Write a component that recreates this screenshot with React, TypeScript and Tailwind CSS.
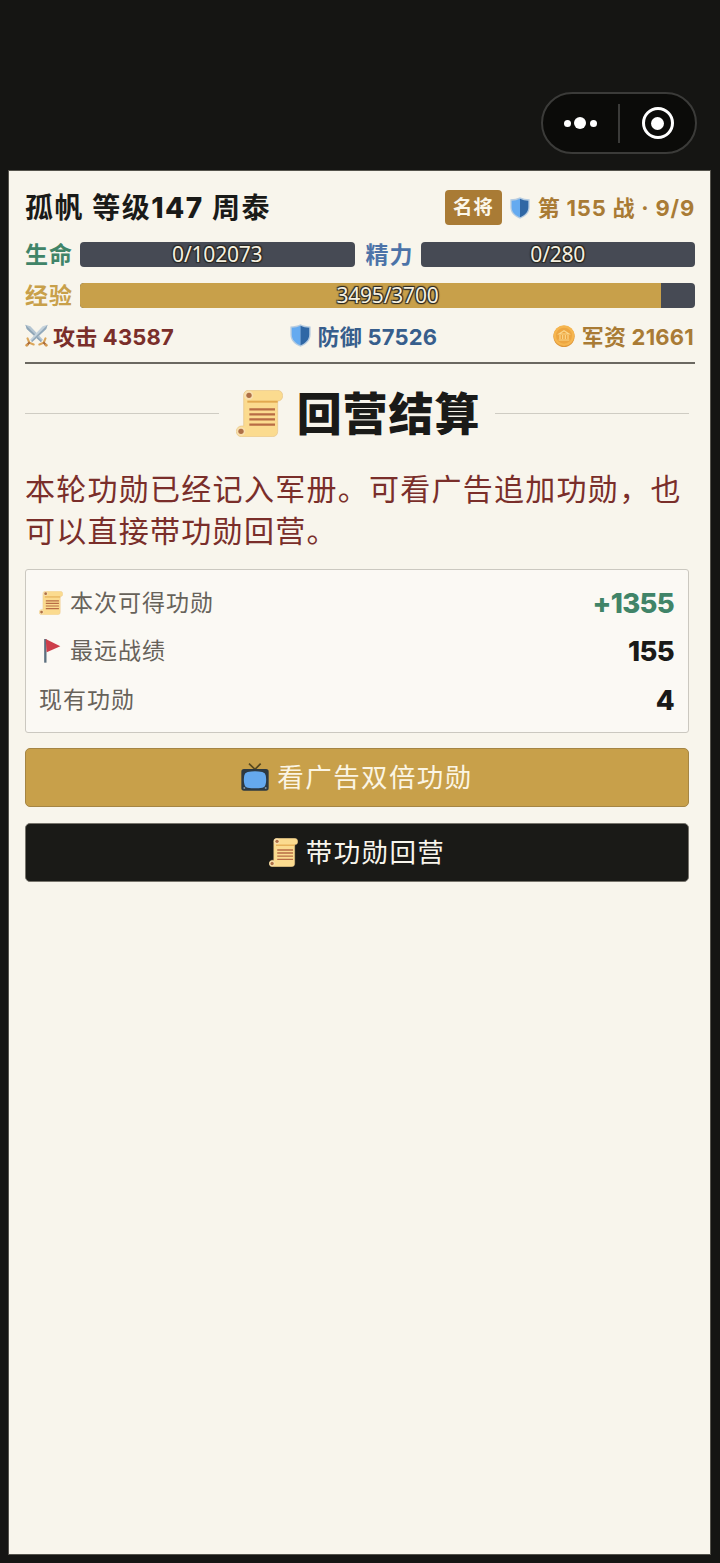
import type { ReactNode } from "react";
import clsx from "clsx";

type IconProps = { className?: string };

function ScrollIcon({ className }: IconProps) {
  return (
    <svg viewBox="0 0 141 141" className={clsx("shrink-0", className)}>
      <path
        d="M38 1H124C134 1 140 8 140 17C140 27 134 33 125 33V124C125 134 119 140 109 140H16C7 140 1 133 1 124C1 115 8 108 16 108H23V16C23 7 29 1 38 1Z"
        fill="#fbdb8f"
        stroke="#e6c48c"
        strokeWidth="2"
      />
      <circle cx="38" cy="16" r="14" fill="#f8dfae" />
      <circle cx="15" cy="124" r="13" fill="#f8dfae" />
      <path d="M34 35H125" stroke="#e2a94f" strokeWidth="6" />
      <circle cx="39" cy="16" r="8" fill="#ae6f47" />
      <circle cx="15" cy="124" r="8" fill="#ae6f47" />
      <path
        d="M40 58H117M40 73H117M40 88H117M40 104H117"
        stroke="#b86c45"
        strokeWidth="7"
      />
    </svg>
  );
}

function ShieldIcon({ className }: IconProps) {
  return (
    <svg viewBox="0 0 60 66" className={clsx("shrink-0", className)}>
      <path
        d="M30 1C22 5 12 7 1 7V30C1 47 13 59 30 65C47 59 59 47 59 30V7C48 7 38 5 30 1Z"
        fill="#b5cbe0"
      />
      <path d="M30 5C23 9 14 10 5 11V30C5 45 15 55 30 61Z" fill="#64aaf0" />
      <path d="M30 5C37 9 46 10 55 11V30C55 45 45 55 30 61Z" fill="#2f67a5" />
    </svg>
  );
}

function SwordsIcon({ className }: IconProps) {
  return (
    <svg viewBox="0 0 64 64" className={clsx("shrink-0", className)}>
      <path d="M1 2L15 6L50 44L44 50L5 14Z" fill="#b4c5d2" />
      <path d="M1 2L47 47L44 50L5 14Z" fill="#8fa5b6" />
      <path d="M63 2L49 6L14 44L20 50L59 14Z" fill="#c4d2dc" />
      <path d="M63 2L17 47L20 50L59 14Z" fill="#93a9ba" />
      <path
        d="M7 40L12 52L24 57M57 40L52 52L40 57"
        fill="none"
        stroke="#dba65a"
        strokeWidth="6"
        strokeLinecap="round"
      />
      <path d="M13 51L5 59M51 51L59 59" stroke="#a86b3b" strokeWidth="6" />
      <circle cx="5" cy="59" r="4" fill="#d59a50" />
      <circle cx="59" cy="59" r="4" fill="#d59a50" />
    </svg>
  );
}

function CoinIcon({ className }: IconProps) {
  return (
    <svg viewBox="0 0 66 66" className={clsx("shrink-0", className)}>
      <circle cx="33" cy="34" r="32" fill="#dd963a" />
      <circle cx="33" cy="32" r="31" fill="#f6b64f" />
      <circle cx="33" cy="32" r="24" fill="#eda641" />
      <path
        d="M18 27L33 17L48 27ZM21 30V42M29 30V42M37 30V42M45 30V42M17 45H49"
        fill="none"
        stroke="#fbd78c"
        strokeWidth="3.5"
      />
    </svg>
  );
}

function FlagIcon({ className }: IconProps) {
  return (
    <svg viewBox="0 0 72 72" className={clsx("shrink-0", className)}>
      <path d="M19 0V71" stroke="#5c7080" strokeWidth="7" />
      <path d="M20 0L64 22L23 40Z" fill="#cd3f4b" />
    </svg>
  );
}

function TvIcon({ className }: IconProps) {
  return (
    <svg viewBox="0 0 84 84" className={clsx("shrink-0", className)}>
      <path
        d="M24 2L42 19L59 2"
        fill="none"
        stroke="#57481f"
        strokeWidth="5"
      />
      <rect x="1" y="18" width="82" height="65" rx="8" fill="#2d3942" />
      <path
        d="M20 27Q42 22 64 27Q73 29 74 37Q77 50 74 63Q73 72 64 74Q42 78 20 74Q11 72 10 63Q7 50 10 37Q11 29 20 27Z"
        fill="#65a9ee"
      />
      <circle cx="10" cy="75" r="3" fill="#8294a0" />
      <circle cx="74" cy="75" r="3" fill="#8294a0" />
    </svg>
  );
}

function Capsule() {
  return (
    <div className="flex h-[62px] w-[156px] items-center rounded-full border-2 border-[#3b3b39] bg-[#0b0b09]">
      <div className="flex w-[75px] items-center justify-center gap-[3.5px] pr-px">
        <span className="size-[7px] rounded-full bg-white" />
        <span className="size-[12px] rounded-full bg-white" />
        <span className="size-[7px] rounded-full bg-white" />
      </div>
      <div className="h-[39px] w-[2px] bg-[#3b3b39]" />
      <div className="flex flex-1 items-center justify-center">
        <div className="flex size-[32px] items-center justify-center rounded-full border-[3.5px] border-white">
          <span className="size-[13px] rounded-full bg-white" />
        </div>
      </div>
    </div>
  );
}

type BarProps = {
  label: string;
  labelClass: string;
  value: number;
  max: number;
};

function StatBar({ label, labelClass, value, max }: BarProps) {
  return (
    <div className="flex h-[25px] flex-1 items-center gap-2">
      <span
        className={clsx(
          "w-[47px] pt-px text-[23px] leading-none font-bold tracking-[0.9px] whitespace-nowrap",
          labelClass
        )}
      >
        {label}
      </span>
      <div className="relative h-full flex-1 rounded-[4px] bg-[#464a54]">
        <div
          className="h-full rounded-l-[4px] bg-[#c8a04a]"
          style={{ width: `${(value / max) * 100}%` }}
        />
        <span className="absolute inset-0 text-center font-['Noto_Sans',sans-serif] text-[21px] leading-[24px] tracking-[-0.2px] text-[#f5f0e0] [text-shadow:1px_1px_1px_#2a2822,-1px_-1px_1px_#2a2822,1px_-1px_1px_#2a2822,-1px_1px_1px_#2a2822]">
          {value}/{max}
        </span>
      </div>
    </div>
  );
}

type StatProps = { icon: ReactNode; className: string; children: ReactNode };

function Stat({ icon, className, children }: StatProps) {
  return (
    <div
      className={clsx(
        "flex items-center gap-[5px] text-[22px] leading-none font-bold tracking-[0.2px] whitespace-nowrap",
        className
      )}
    >
      {icon}
      <span className="pt-0.5">{children}</span>
    </div>
  );
}

type RowProps = {
  icon?: ReactNode;
  label: string;
  value: string;
  valueClass?: string;
};

function ResultRow({ icon, label, value, valueClass }: RowProps) {
  return (
    <div className="flex h-[48.6px] items-center justify-between">
      <div className="flex items-center gap-[7px] text-[23px] leading-none tracking-[1px] text-[#67625a]">
        {icon}
        <span className="pt-px">{label}</span>
      </div>
      <span
        className={clsx(
          "pt-px pr-px text-[27.5px] leading-none font-extrabold tracking-[-0.7px]",
          valueClass ?? "text-[#1a1a18]"
        )}
      >
        {value}
      </span>
    </div>
  );
}

export default function App() {
  return (
    <div className="flex h-[1563px] w-[720px] flex-col bg-[#151513] px-2 pb-2 font-['Inter','Noto_Sans_CJK_SC',sans-serif]">
      <header className="flex h-[170px] shrink-0 items-end justify-end pr-[15px] pb-4">
        <Capsule />
      </header>

      <main className="mr-px flex flex-1 flex-col border border-[#55534c] bg-[#f8f5ec] pr-[15px] pl-4">
        <div className="mt-[19px] flex h-[35px] items-center justify-between">
          <h1 className="text-[28px] leading-none font-bold tracking-[1.5px] whitespace-nowrap text-[#1a1a18]">
            孤帆 等级<span className="font-extrabold">147</span> 周泰
          </h1>
          <div className="flex items-center gap-2">
            <span className="flex h-[35px] w-[57px] items-center justify-center rounded-[4px] bg-[#a97b35] text-[19.5px] leading-none font-bold tracking-[0.6px] text-[#fbf7ea]">
              名将
            </span>
            <ShieldIcon className="h-[22px] w-[20px]" />
            <span className="pt-px text-[22px] leading-none font-bold tracking-[0.8px] whitespace-nowrap text-[#a97b35]">
              第 155 战 · 9/9
            </span>
          </div>
        </div>

        <div className="mt-[17px] flex gap-[11px]">
          <StatBar label="生命" labelClass="text-[#408468]" value={0} max={102073} />
          <StatBar label="精力" labelClass="text-[#4c73a8]" value={0} max={280} />
        </div>
        <div className="mt-[16px] flex">
          <StatBar label="经验" labelClass="text-[#c8a04a]" value={3495} max={3700} />
        </div>

        <div className="mt-[11px] flex h-[33px] items-center justify-between">
          <Stat
            className="text-[#7a2e2a]"
            icon={<SwordsIcon className="size-[23px]" />}
          >
            攻击 43587
          </Stat>
          <Stat
            className="text-[#375e8c]"
            icon={<ShieldIcon className="mr-0.5 h-[23px] w-[21px]" />}
          >
            防御 57526
          </Stat>
          <Stat
            className="pr-px text-[#a97b35]"
            icon={<CoinIcon className="mr-0.5 size-[22px]" />}
          >
            军资 21661
          </Stat>
        </div>
        <div className="mt-[10px] h-[1.5px] bg-[#6b6861]" />

        <div className="mr-[6px] flex flex-col">
          <div className="mt-[20px] flex h-[60px] items-center">
            <div className="h-px flex-1 bg-[#cfccc3]" />
            <div className="flex items-center gap-[14px] pr-[15px] pl-[17px]">
              <ScrollIcon className="size-[47px]" />
              <h2 className="pt-0.5 text-[45px] leading-none font-extrabold tracking-[0.9px] whitespace-nowrap text-[#1a1a18]">
                回营结算
              </h2>
            </div>
            <div className="h-px flex-1 bg-[#cfccc3]" />
          </div>

          <p className="mt-[24px] text-[30px] leading-[42px] tracking-[1.27px] whitespace-nowrap text-[#7a2e2a]">
            本轮功勋已经记入军册。可看广告追加功勋，也
            <br />
            可以直接带功勋回营。
          </p>

          <section className="mt-[17px] h-[164px] rounded-[3px] border border-[#cbc8c0] bg-[#fbf9f4] px-[13px] pt-[9px]">
            <ResultRow
              icon={<ScrollIcon className="size-[24px]" />}
              label="本次可得功勋"
              value="+1355"
              valueClass="text-[#408468]"
            />
            <ResultRow
              icon={<FlagIcon className="size-[24px]" />}
              label="最远战绩"
              value="155"
            />
            <ResultRow label="现有功勋" value="4" />
          </section>

          <button className="mt-[15px] flex h-[59px] items-center justify-center gap-2 rounded-[5px] border border-[#a58544] bg-[#c8a04a] text-[26.5px] leading-none tracking-[1.4px] text-[#fbf5e4]">
            <TvIcon className="size-[28px]" />
            <span className="pt-px">看广告双倍功勋</span>
          </button>
          <button className="mt-[16px] flex h-[59px] items-center justify-center gap-2 rounded-[5px] border border-[#77746c] bg-[#1a1a17] text-[26.5px] leading-none tracking-[1.4px] text-[#f8f5ec]">
            <ScrollIcon className="size-[29px]" />
            <span className="pt-px">带功勋回营</span>
          </button>
        </div>
      </main>
    </div>
  );
}
